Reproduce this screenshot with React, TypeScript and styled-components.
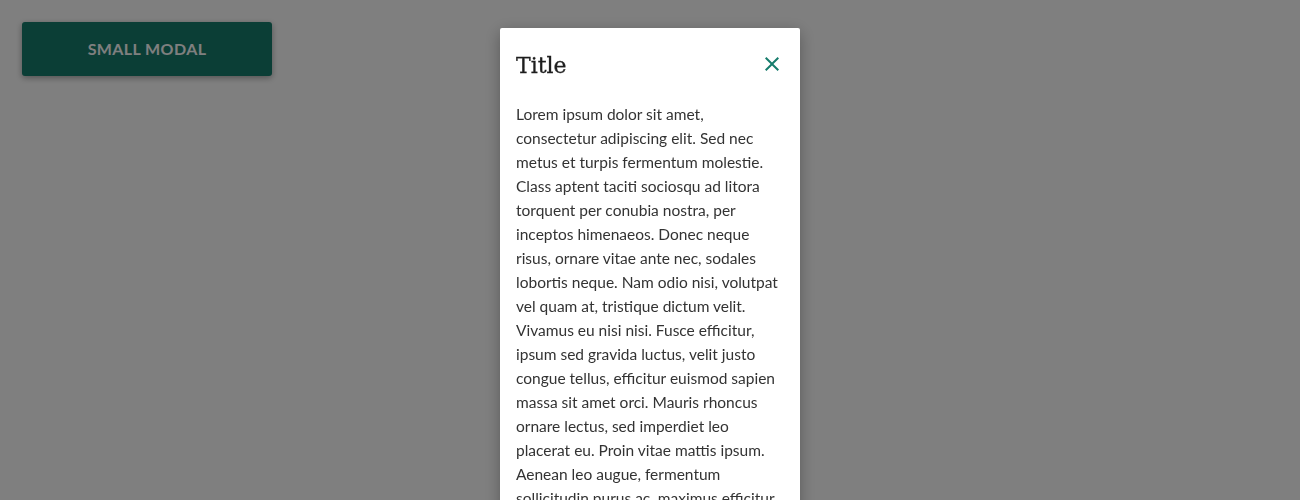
import React from 'react';
import styled, { createGlobalStyle } from 'styled-components';

const GlobalStyle = createGlobalStyle`
  html, body {
    margin: 0;
    padding: 0;
    background: #ffffff;
    height: 100%;
    overflow: hidden;
  }
  body {
    font-family: 'Lato', 'Noto Sans', sans-serif;
  }
`;

const Page = styled.div`
  padding: 22px;
`;

const OpenButton = styled.button`
  width: 250px;
  height: 54px;
  padding: 0 0 2px;
  border: none;
  border-radius: 3px;
  background: #167c6c;
  color: #ffffff;
  font-family: 'Lato', 'Noto Sans', sans-serif;
  font-weight: 700;
  font-size: 16px;
  letter-spacing: 0.4px;
  text-transform: uppercase;
  box-shadow: 0 2px 6px rgba(0, 0, 0, 0.35);
  cursor: pointer;
`;

const Overlay = styled.div`
  position: fixed;
  inset: 0;
  background: rgba(0, 0, 0, 0.5);
  display: flex;
  justify-content: center;
  align-items: flex-start;
  padding-top: 28px;
`;

const Modal = styled.div`
  width: 300px;
  background: #ffffff;
  border-radius: 2px;
  box-shadow: 0 4px 16px rgba(0, 0, 0, 0.3);
`;

const Header = styled.div`
  display: flex;
  align-items: center;
  justify-content: space-between;
  height: 24px;
  padding: 24px 16px 26px;
`;

const Title = styled.h2`
  margin: 0;
  font-family: 'DejaVu Serif', 'Liberation Serif', serif;
  font-weight: 400;
  font-size: 22px;
  line-height: 24px;
  color: #1e1e1e;
  -webkit-text-stroke: 0.3px #1e1e1e;
  position: relative;
  top: 2px;
`;

const CloseButton = styled.button`
  width: 24px;
  height: 24px;
  padding: 0;
  border: none;
  background: none;
  color: #167c6c;
  display: flex;
  align-items: center;
  justify-content: center;
  cursor: pointer;
`;

const Body = styled.div`
  padding: 0 16px 24px;
  font-size: 15.5px;
  line-height: 24px;
  color: #333333;
`;

const Line = styled.span`
  display: block;
  white-space: nowrap;
`;

const lines = [
  'Lorem ipsum dolor sit amet,',
  'consectetur adipiscing elit. Sed nec',
  'metus et turpis fermentum molestie.',
  'Class aptent taciti sociosqu ad litora',
  'torquent per conubia nostra, per',
  'inceptos himenaeos. Donec neque',
  'risus, ornare vitae ante nec, sodales',
  'lobortis neque. Nam odio nisi, volutpat',
  'vel quam at, tristique dictum velit.',
  'Vivamus eu nisi nisi. Fusce efficitur,',
  'ipsum sed gravida luctus, velit justo',
  'congue tellus, efficitur euismod sapien',
  'massa sit amet orci. Mauris rhoncus',
  'ornare lectus, sed imperdiet leo',
  'placerat eu. Proin vitae mattis ipsum.',
  'Aenean leo augue, fermentum',
  'sollicitudin purus ac, maximus efficitur',
  'lectus. Nunc non lorem at elit',
  'tincidunt tempor.',
];

const CloseIcon = () => (
  <svg width="24" height="24" viewBox="0 0 24 24" fill="currentColor">
    <path d="M19 6.41 17.59 5 12 10.59 6.41 5 5 6.41 10.59 12 5 17.59 6.41 19 12 13.41 17.59 19 19 17.59 13.41 12z" />
  </svg>
);

const App = () => (
  <>
    <GlobalStyle />
    <Page>
      <OpenButton>Small modal</OpenButton>
    </Page>
    <Overlay>
      <Modal role="dialog">
        <Header>
          <Title>Title</Title>
          <CloseButton aria-label="Close">
            <CloseIcon />
          </CloseButton>
        </Header>
        <Body>
          {lines.map((l) => (
            <Line key={l}>{l}</Line>
          ))}
        </Body>
      </Modal>
    </Overlay>
  </>
);

export default App;
